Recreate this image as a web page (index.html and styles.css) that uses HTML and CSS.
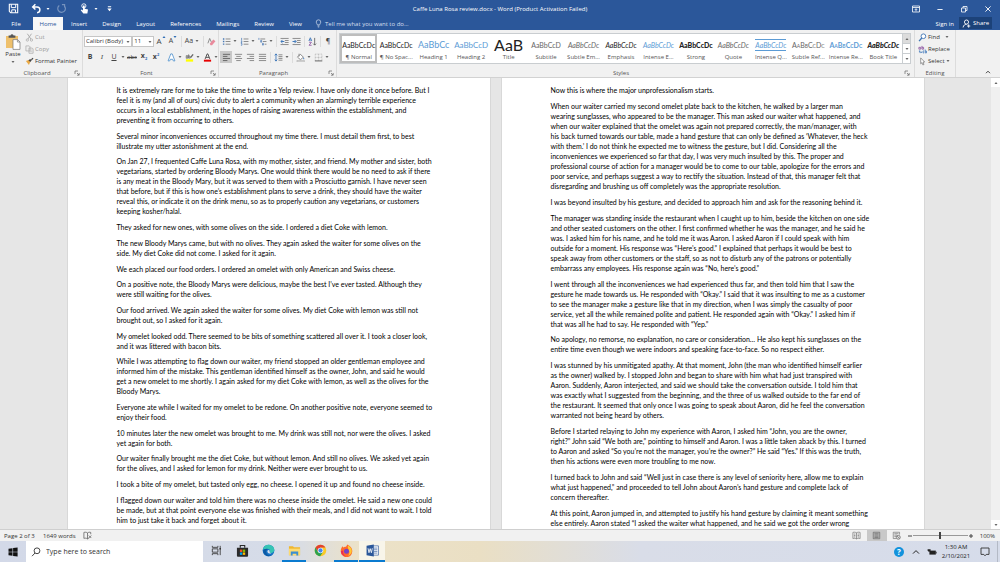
FILE: index.html
```html
<!DOCTYPE html>
<html lang="en">
<head>
<meta charset="utf-8">
<title>Caffe Luna Rosa review.docx - Word</title>
<link rel="stylesheet" href="styles.css">
</head>
<body>
<svg class="defs" aria-hidden="true">
  <symbol id="caret" viewBox="0 0 4 4"><path d="M.5 1h3L2 3z" fill="currentColor"/></symbol>
  <symbol id="launch" viewBox="0 0 6 6"><path d="M1 4V1h3M3 3l2 2M5.2 3v2.2H3" fill="none" stroke="#666" stroke-width=".7"/></symbol>
</svg>

<header class="top">
  <div class="titlebar">
    <div class="quick">
      <button class="tb spaced" aria-label="Save"><svg viewBox="0 0 10 10"><path d="M1.2 1.2h7.6v7.6H2.4L1.2 7.6z" fill="none" stroke="#fff"/><path d="M3 1.2v3h4v-3M3.4 8.8V6.2h3.4v2.6" fill="none" stroke="#fff" stroke-width=".9"/></svg></button>
      <button class="tb tb-split" aria-label="Undo"><svg viewBox="0 0 10 10"><path d="M4 1.2L1.5 3.6 4 6M1.8 3.6h3.7a2.6 2.6 0 0 1 0 5.2" fill="none" stroke="#fff" stroke-width="1.3"/></svg><svg class="caret"><use href="#caret"/></svg></button>
      <button class="tb dim spaced" aria-label="Redo"><svg viewBox="0 0 10 10"><path d="M3 2.2A3.5 3.5 0 1 0 7.6 2.6M5.4 1.4h2.4v2.6" fill="none" stroke="#fff" stroke-width="1.1"/></svg></button>
      <button class="tb tb-split" aria-label="Touch mode"><svg viewBox="0 0 10 10"><circle cx="4.4" cy="2.6" r="1.9" fill="none" stroke="#fff" stroke-width=".8"/><path d="M3.6 2.2h1.6v3l3 .8-.6 3.6H4L1.6 6.6l.8-.6 1.2.8z" fill="#fff"/></svg><svg class="caret"><use href="#caret"/></svg></button>
      <button class="tb narrow" aria-label="Customize"><svg viewBox="0 0 10 10"><path d="M3.5 3h3v.9h-3zM3 5h4L5 7.4z" fill="#fff"/></svg></button>
    </div>
    <div class="doc-title">Caffe Luna Rosa review.docx - Word (Product Activation Failed)</div>
    <div class="win">
      <button aria-label="Ribbon options"><svg viewBox="0 0 10 10"><path d="M1.5 2h7v6h-7zM1.5 3.5h7M5 7.4V4.8M3.8 5.9L5 4.7l1.2 1.2" fill="none" stroke="#fff" stroke-width=".8"/></svg></button>
      <button aria-label="Minimize"><svg viewBox="0 0 10 10"><path d="M2.4 5.5h5.2" stroke="#fff" stroke-width=".9"/></svg></button>
      <button aria-label="Restore"><svg viewBox="0 0 10 10"><path d="M2.5 4h4v4h-4zM4 4V2.5h4v4H6.5" fill="none" stroke="#fff" stroke-width=".8"/></svg></button>
      <button aria-label="Close"><svg viewBox="0 0 10 10"><path d="M2.4 2.4l5.2 5.2M7.6 2.4L2.4 7.6" stroke="#fff" stroke-width=".9"/></svg></button>
    </div>
  </div>
  <nav class="tabs">
    <button class="file">File</button>
    <button class="active">Home</button>
    <button>Insert</button>
    <button>Design</button>
    <button>Layout</button>
    <button>References</button>
    <button>Mailings</button>
    <button>Review</button>
    <button>View</button>
    <button class="tell"><svg viewBox="0 0 8 10"><path d="M2.8 6.6C2.6 5.4 1.4 5 1.4 3.4a2.6 2.6 0 0 1 5.2 0c0 1.6-1.2 2-1.4 3.2zM2.9 7.8h2.2M3.2 9h1.6" fill="none" stroke="currentColor" stroke-width=".8"/></svg>Tell me what you want to do...</button>
    <span class="grow"></span>
    <button class="signin">Sign in</button>
    <button class="share"><svg viewBox="0 0 10 10"><circle cx="5" cy="3.4" r="2.3" fill="none" stroke="#fff"/><path d="M1.2 9.4C1.6 6.6 3.4 6 5 6M7.4 6v3.6M5.6 7.8h3.6" fill="none" stroke="#fff"/></svg>Share</button>
  </nav>
</header>

<section class="ribbon" aria-label="Home ribbon">
  <div class="group clipboard">
    <div class="group-body">
      <button class="paste"><svg viewBox="0 0 16 17"><path d="M1 3h12v12H1z" fill="#eec06c"/><path d="M3.6 2.4h1.8a1.7 1.7 0 0 1 3.2 0h1.8v2.4H3.6z" fill="#555"/><path d="M8 6.6h4.6L15 9v7.4H8z" fill="#fff" stroke="#777" stroke-width=".7"/><path d="M12.4 6.6V9H15" fill="none" stroke="#777" stroke-width=".7"/></svg>Paste<svg class="caret"><use href="#caret"/></svg></button>
      <div class="stack">
        <button class="off"><svg viewBox="0 0 10 10"><path d="M2.6.8l4 6M7.2.8l-4 6" fill="none" stroke="#aaa"/><circle cx="2.6" cy="7.8" r="1.3" fill="none" stroke="#aaa" stroke-width=".8"/><circle cx="7.2" cy="7.8" r="1.3" fill="none" stroke="#aaa" stroke-width=".8"/></svg>Cut</button>
        <button class="off"><svg viewBox="0 0 10 10"><path d="M1 1h3.6l1 1v4.6H1zM4.4 3.4H8l1 1v4.8H4.4z" fill="#eee" stroke="#aaa" stroke-width=".8"/><path d="M5.4 5.6H8M5.4 7.2H8" stroke="#bbb" stroke-width=".6"/></svg>Copy</button>
        <button><svg viewBox="0 0 10 10"><path d="M1 4.4l3-1.2 2 2-1.6 3.6z" fill="#eaa945"/><path d="M3.8 3.6l2-1.4 1.6 1.8-1.6 1.6zM6.6 2.6L8.6.8l.8 1L7.6 3.6z" fill="#444"/></svg>Format Painter</button>
      </div>
    </div>
    <div class="group-name">Clipboard<svg><use href="#launch"/></svg></div>
  </div>

  <div class="group font">
    <div class="group-body rows">
      <div class="row">
        <span class="pick pick-font"><select aria-label="Font"><option>Calibri (Body)</option></select><svg class="caret"><use href="#caret"/></svg></span>
        <span class="pick pick-size"><select aria-label="Font size"><option>11</option></select><svg class="caret"><use href="#caret"/></svg></span>
        <button class="ib big" aria-label="Grow font">A<svg class="mark"><use href="#caret"/></svg></button>
        <button class="ib" aria-label="Shrink font">A<svg class="mark flip"><use href="#caret"/></svg></button>
        <i class="sep"></i>
        <button class="ib wide">Aa<svg class="caret"><use href="#caret"/></svg></button>
        <i class="sep"></i>
        <button class="ib" aria-label="Clear formatting"><svg viewBox="0 0 10 10"><path d="M1 7l2-5.4L5 6" fill="none" stroke="#777" stroke-width=".9"/><path d="M3 7.4l4-4.6 2.4 2L5.6 9.2H4z" fill="#e98a9c"/></svg></button>
      </div>
      <div class="row">
        <button class="ib"><b>B</b></button>
        <button class="ib"><em class="serif">I</em></button>
        <button class="ib"><u>U</u></button>
        <button class="ic" aria-label="Underline style"><svg class="caret"><use href="#caret"/></svg></button>
        <button class="ib small"><s>abc</s></button>
        <button class="ib"><b>x<sub>2</sub></b></button>
        <button class="ib"><b>x<sup>2</sup></b></button>
        <i class="sep"></i>
        <button class="ib" aria-label="Text effects"><svg viewBox="0 0 10 10"><path d="M1.2 8.8L4.2 1h1.6l3 7.8H7L6.3 7H3.7L3 8.8z" fill="#fff" stroke="#4d8fcc" stroke-width=".9"/></svg></button>
        <button class="ic" aria-label="Text effects menu"><svg class="caret"><use href="#caret"/></svg></button>
        <button class="ib" aria-label="Highlight"><svg viewBox="0 0 10 10"><path d="M1 7h8v2.6H1z" fill="#ff0"/><path d="M1.4 5.8V3h1.6v2.8zM4 5.8V1.6M4 3.4h1.6v2.2H4" fill="none" stroke="#555" stroke-width=".8"/><path d="M5.8 6l.4-2L8.4 1l1.2.9L7.2 5z" fill="#666"/></svg></button>
        <button class="ic" aria-label="Highlight color"><svg class="caret"><use href="#caret"/></svg></button>
        <button class="ib" aria-label="Font color"><svg viewBox="0 0 10 10"><path d="M1 7.4h8v2.2H1z" fill="#e60000"/><path d="M2.4 6.6L4.6 1h.8l2.2 5.6M3.2 4.8h3.6" fill="none" stroke="#444"/></svg></button>
        <button class="ic" aria-label="Font color menu"><svg class="caret"><use href="#caret"/></svg></button>
      </div>
    </div>
    <div class="group-name">Font<svg><use href="#launch"/></svg></div>
  </div>

  <div class="group para">
    <div class="group-body rows">
      <div class="row">
        <button class="ib" aria-label="Bullets"><svg viewBox="0 0 10 10"><path d="M1 1.4h1.6V3H1zM1 4.3h1.6v1.5H1zM1 7.2h1.6v1.5H1z" fill="#4778b5"/><path d="M4 2.2h5.4M4 5h5.4M4 8h5.4" stroke="#777" stroke-width=".9"/></svg></button>
        <button class="ic" aria-label="Bullet menu"><svg class="caret"><use href="#caret"/></svg></button>
        <button class="ib" aria-label="Numbering"><svg viewBox="0 0 10 10"><path d="M1.8 1v2.4M1 4.3h1.2v.8L1 6h1.4M1 7.2h1.2v1.9H1" fill="none" stroke="#4778b5" stroke-width=".8"/><path d="M4 2.2h5.4M4 5h5.4M4 8h5.4" stroke="#777" stroke-width=".9"/></svg></button>
        <button class="ic" aria-label="Numbering menu"><svg class="caret"><use href="#caret"/></svg></button>
        <button class="ib" aria-label="Multilevel list"><svg viewBox="0 0 10 10"><path d="M1 1v2.2M3 3.8h1v2H3zM5 7h1v2H5z" fill="none" stroke="#4778b5" stroke-width=".8"/><path d="M2.6 2.2H8M5.4 5h4M7.4 8h2" stroke="#777" stroke-width=".9"/></svg></button>
        <button class="ic" aria-label="Multilevel menu"><svg class="caret"><use href="#caret"/></svg></button>
        <i class="sep"></i>
        <button class="ib" aria-label="Decrease indent"><svg viewBox="0 0 10 10"><path d="M.6 1.6h9M5.4 3.9h4.2M5.4 6.1h4.2M.6 8.4h9" stroke="#777" stroke-width=".9"/><path d="M4.8 5H1.2M2.8 3.2L1 5l1.8 1.8" fill="none" stroke="#2f6db5"/></svg></button>
        <button class="ib" aria-label="Increase indent"><svg viewBox="0 0 10 10"><path d="M.6 1.6h9M5.4 3.9h4.2M5.4 6.1h4.2M.6 8.4h9" stroke="#777" stroke-width=".9"/><path d="M.6 5h3.6M2.8 3.2L4.6 5 2.8 6.8" fill="none" stroke="#2f6db5"/></svg></button>
        <i class="sep"></i>
        <button class="ib" aria-label="Sort"><svg viewBox="0 0 10 10"><path d="M1 4.4L2.6.8l1.6 3.6M1.6 3.4h2" fill="none" stroke="#2f6db5" stroke-width=".9"/><path d="M1.2 5.8h2.6L1.2 9.2h2.8" fill="none" stroke="#8a4f9e" stroke-width=".9"/><path d="M7.4 1v8M5.8 7.4L7.4 9 9 7.4" fill="none" stroke="#555" stroke-width=".9"/></svg></button>
        <i class="sep"></i>
        <button class="ib">¶</button>
      </div>
      <div class="row">
        <button class="ib on" aria-label="Align left"><svg viewBox="0 0 10 10"><path d="M1 1.5h8M1 3.8h5M1 6.1h8M1 8.4h5" stroke="#555" stroke-width=".9"/></svg></button>
        <button class="ib" aria-label="Center"><svg viewBox="0 0 10 10"><path d="M1 1.5h8M2.5 3.8h5M1 6.1h8M2.5 8.4h5" stroke="#777" stroke-width=".9"/></svg></button>
        <button class="ib" aria-label="Align right"><svg viewBox="0 0 10 10"><path d="M1 1.5h8M4 3.8h5M1 6.1h8M4 8.4h5" stroke="#777" stroke-width=".9"/></svg></button>
        <button class="ib" aria-label="Justify"><svg viewBox="0 0 10 10"><path d="M1 1.5h8M1 3.8h8M1 6.1h8M1 8.4h8" stroke="#777" stroke-width=".9"/></svg></button>
        <i class="sep"></i>
        <button class="ib" aria-label="Line spacing"><svg viewBox="0 0 10 10"><path d="M2.2 1v8M.8 2.6L2.2 1l1.4 1.6M.8 7.4L2.2 9l1.4-1.6" fill="none" stroke="#2f6db5" stroke-width=".9"/><path d="M5 2h4.4M5 4h4.4M5 6h4.4M5 8h4.4" stroke="#777" stroke-width=".9"/></svg></button>
        <button class="ic" aria-label="Line spacing menu"><svg class="caret"><use href="#caret"/></svg></button>
        <i class="sep"></i>
        <button class="ib" aria-label="Shading"><svg viewBox="0 0 10 10"><path d="M1.6 4.6L4.8 1.4l3.4 3.2L5 7.4zM3.4.8v3" fill="#fff" stroke="#666" stroke-width=".8"/><path d="M8.4 4.6c1 1.4 1 2.2.4 2.4s-1-.6-.4-2.4" fill="#2f6db5"/><path d="M1 8.4h8.4v1.2H1z" fill="#fff" stroke="#888" stroke-width=".5"/></svg></button>
        <button class="ic" aria-label="Shading menu"><svg class="caret"><use href="#caret"/></svg></button>
        <button class="ib" aria-label="Borders"><svg viewBox="0 0 10 10"><path d="M1.4 1.2h7.4v7.4M1.4 1.2v7.4M5.1 1.2v7.4M1.4 4.9h7.4" fill="none" stroke="#aaa" stroke-width=".7" stroke-dasharray="1 .6"/><path d="M1 8.8h8.2" stroke="#555"/></svg></button>
        <button class="ic" aria-label="Borders menu"><svg class="caret"><use href="#caret"/></svg></button>
      </div>
    </div>
    <div class="group-name">Paragraph<svg><use href="#launch"/></svg></div>
  </div>

  <div class="group styles">
    <div class="gallery">
      <div class="cards">
        <button class="card chosen"><span class="demo">AaBbCcDc</span><span>¶ Normal</span></button>
        <button class="card"><span class="demo">AaBbCcDc</span><span>¶ No Spac...</span></button>
        <button class="card"><span class="demo h1">AaBbCc</span><span>Heading 1</span></button>
        <button class="card"><span class="demo h2">AaBbCcD</span><span>Heading 2</span></button>
        <button class="card"><span class="demo title">AaB</span><span>Title</span></button>
        <button class="card"><span class="demo gray">AaBbCcD</span><span>Subtitle</span></button>
        <button class="card"><span class="demo gray it">AaBbCcDc</span><span>Subtle Em...</span></button>
        <button class="card"><span class="demo it">AaBbCcDc</span><span>Emphasis</span></button>
        <button class="card"><span class="demo blue it">AaBbCcDc</span><span>Intense E...</span></button>
        <button class="card"><span class="demo bold">AaBbCcDc</span><span>Strong</span></button>
        <button class="card"><span class="demo gray it">AaBbCcDc</span><span>Quote</span></button>
        <button class="card"><span class="demo blue it ruled">AaBbCcDc</span><span>Intense Q...</span></button>
        <button class="card"><span class="demo gray caps">AaBbCcDc</span><span>Subtle Ref...</span></button>
        <button class="card"><span class="demo blue caps semi">AaBbCcDc</span><span>Intense Re...</span></button>
        <button class="card"><span class="demo bold it">AaBbCcDc</span><span>Book Title</span></button>
      </div>
      <div class="scrolls">
        <button class="off" aria-label="Previous styles"><svg class="caret flip"><use href="#caret"/></svg></button>
        <button aria-label="Next styles"><svg class="caret"><use href="#caret"/></svg></button>
        <button class="more" aria-label="More styles"><svg class="caret"><use href="#caret"/></svg></button>
      </div>
    </div>
    <div class="group-name">Styles<svg><use href="#launch"/></svg></div>
  </div>

  <div class="group editing">
    <div class="group-body">
      <div class="stack">
        <button><svg viewBox="0 0 10 10"><circle cx="6" cy="3.6" r="2.6" fill="#fff" stroke="#3f76b5"/><path d="M4.2 5.6L1.2 9" stroke="#3f76b5" stroke-width="1.5"/></svg>Find<svg class="caret far"><use href="#caret"/></svg></button>
        <button><svg viewBox="0 0 10 10"><path d="M1 2.6h2v2H1zM4.4 1v3.6h1.8v-2H4.4" fill="none" stroke="#8a4f9e" stroke-width=".9"/><path d="M6.6 6.6h-1v2.2h1.2M8 5v3.8h1.4V6.8H8M1.6 6v2h2.2M3 7l1 1-1 1" fill="none" stroke="#2f6db5" stroke-width=".8"/></svg>Replace</button>
        <button><svg viewBox="0 0 10 10"><path d="M3 1l4.4 4.6H5.6l1 2.8-1.2.4-1-2.6L3 7.6z" fill="#fff" stroke="#666" stroke-width=".7"/></svg>Select<svg class="caret"><use href="#caret"/></svg></button>
      </div>
    </div>
    <div class="group-name plain">Editing</div>
  </div>
  <button class="collapse" aria-label="Collapse ribbon"><svg viewBox="0 0 6 6"><path d="M1 4.2l2-2 2 2" fill="none" stroke="#444"/></svg></button>
</section>

<main class="workspace">
  <div class="pages">
    <article class="page">
      <p>It is extremely rare for me to take the time to write a Yelp review. I have only done it once before. But I<br>feel it is my (and all of ours) civic duty to alert a community when an alarmingly terrible experience<br>occurs in a local establishment, in the hopes of raising awareness within the establishment, and<br>preventing it from occurring to others.</p>
      <p>Several minor inconveniences occurred throughout my time there. I must detail them first, to best<br>illustrate my utter astonishment at the end.</p>
      <p>On Jan 27, I frequented Caffe Luna Rosa, with my mother, sister, and friend. My mother and sister, both<br>vegetarians, started by ordering Bloody Marys. One would think there would be no need to ask if there<br>is any meat in the Bloody Mary, but it was served to them with a Prosciutto garnish. I have never seen<br>that before, but if this is how one’s establishment plans to serve a drink, they should have the waiter<br>reveal this, or indicate it on the drink menu, so as to properly caution any vegetarians, or customers<br>keeping kosher/halal.</p>
      <p>They asked for new ones, with some olives on the side. I ordered a diet Coke with lemon.</p>
      <p>The new Bloody Marys came, but with no olives. They again asked the waiter for some olives on the<br>side. My diet Coke did not come. I asked for it again.</p>
      <p>We each placed our food orders. I ordered an omelet with only American and Swiss cheese.</p>
      <p>On a positive note, the Bloody Marys were delicious, maybe the best I’ve ever tasted. Although they<br>were still waiting for the olives.</p>
      <p>Our food arrived. We again asked the waiter for some olives. My diet Coke with lemon was still not<br>brought out, so I asked for it again.</p>
      <p>My omelet looked odd. There seemed to be bits of something scattered all over it. I took a closer look,<br>and it was littered with bacon bits.</p>
      <p>While I was attempting to flag down our waiter, my friend stopped an older gentleman employee and<br>informed him of the mistake. This gentleman identified himself as the owner, John, and said he would<br>get a new omelet to me shortly. I again asked for my diet Coke with lemon, as well as the olives for the<br>Bloody Marys.</p>
      <p>Everyone ate while I waited for my omelet to be redone. On another positive note, everyone seemed to<br>enjoy their food.</p>
      <p>10 minutes later the new omelet was brought to me. My drink was still not, nor were the olives. I asked<br>yet again for both.</p>
      <p>Our waiter finally brought me the diet Coke, but without lemon. And still no olives. We asked yet again<br>for the olives, and I asked for lemon for my drink. Neither were ever brought to us.</p>
      <p>I took a bite of my omelet, but tasted only egg, no cheese. I opened it up and found no cheese inside.</p>
      <p>I flagged down our waiter and told him there was no cheese inside the omelet. He said a new one could<br>be made, but at that point everyone else was finished with their meals, and I did not want to wait. I told<br>him to just take it back and forget about it.</p>
    </article>
    <article class="page continued">
      <p>Now this is where the major unprofessionalism starts.</p>
      <p>When our waiter carried my second omelet plate back to the kitchen, he walked by a larger man<br>wearing sunglasses, who appeared to be the manager. This man asked our waiter what happened, and<br>when our waiter explained that the omelet was again not prepared correctly, the man/manager, with<br>his back turned towards our table, made a hand gesture that can only be defined as ‘Whatever, the heck<br>with them.’ I do not think he expected me to witness the gesture, but I did. Considering all the<br>inconveniences we experienced so far that day, I was very much insulted by this. The proper and<br>professional course of action for a manager would be to come to our table, apologize for the errors and<br>poor service, and perhaps suggest a way to rectify the situation. Instead of that, this manager felt that<br>disregarding and brushing us off completely was the appropriate resolution.</p>
      <p>I was beyond insulted by his gesture, and decided to approach him and ask for the reasoning behind it.</p>
      <p>The manager was standing inside the restaurant when I caught up to him, beside the kitchen on one side<br>and other seated customers on the other. I first confirmed whether he was the manager, and he said he<br>was. I asked him for his name, and he told me it was Aaron. I asked Aaron if I could speak with him<br>outside for a moment. His response was “Here’s good.” I explained that perhaps it would be best to<br>speak away from other customers or the staff, so as not to disturb any of the patrons or potentially<br>embarrass any employees. His response again was “No, here’s good.”</p>
      <p>I went through all the inconveniences we had experienced thus far, and then told him that I saw the<br>gesture he made towards us. He responded with “Okay.” I said that it was insulting to me as a customer<br>to see the manager make a gesture like that in my direction, when I was simply the casualty of poor<br>service, yet all the while remained polite and patient. He responded again with “Okay.” I asked him if<br>that was all he had to say. He responded with “Yep.”</p>
      <p>No apology, no remorse, no explanation, no care or consideration… He also kept his sunglasses on the<br>entire time even though we were indoors and speaking face-to-face. So no respect either.</p>
      <p>I was stunned by his unmitigated apathy. At that moment, John (the man who identified himself earlier<br>as the owner) walked by. I stopped John and began to share with him what had just transpired with<br>Aaron. Suddenly, Aaron interjected, and said we should take the conversation outside. I told him that<br>was exactly what I suggested from the beginning, and the three of us walked outside to the far end of<br>the restaurant. It seemed that only once I was going to speak about Aaron, did he feel the conversation<br>warranted not being heard by others.</p>
      <p>Before I started relaying to John my experience with Aaron, I asked him “John, you are the owner,<br>right?” John said “We both are,” pointing to himself and Aaron. I was a little taken aback by this. I turned<br>to Aaron and asked “So you’re not the manager, you’re the owner?” He said “Yes.” If this was the truth,<br>then his actions were even more troubling to me now.</p>
      <p>I turned back to John and said “Well just in case there is any level of seniority here, allow me to explain<br>what just happened,” and proceeded to tell John about Aaron’s hand gesture and complete lack of<br>concern thereafter.</p>
      <p>At this point, Aaron jumped in, and attempted to justify his hand gesture by claiming it meant something<br>else entirely. Aaron stated “I asked the waiter what happened, and he said we got the order wrong</p>
    </article>
  </div>
  <div class="vscroll">
    <button aria-label="Scroll up"><svg class="caret flip"><use href="#caret"/></svg></button>
    <span></span>
    <button aria-label="Scroll down"><svg class="caret"><use href="#caret"/></svg></button>
  </div>
</main>

<footer class="status">
  <span class="st-page">Page 2 of 3</span>
  <span class="st-words">1649 words</span>
  <button aria-label="Proofing"><svg viewBox="0 0 10 10"><path d="M5 2.2C3.8 1.2 2.4 1.2 1 1.6v6.6c1.4-.4 2.8-.4 4 .6zM5 2.2c1.2-1 2.6-1 3.6-.6v2M5 8.8c.6-.6 1.2-.8 1.8-.8M6.4 5l2.8 2.8M9.2 5L6.4 7.8" fill="none" stroke="#555" stroke-width=".8"/></svg></button>
  <span class="grow"></span>
  <button class="view" aria-label="Read mode"><svg viewBox="0 0 10 10"><path d="M5 2C3.6 1.2 2.2 1.2 1 1.6v6.8c1.4-.4 2.6-.4 4 .4 1.4-.8 2.6-.8 4-.4V1.6c-1.2-.4-2.6-.4-4 .4v6.8M2.2 3.4h1.6M2.2 5h1.6M2.2 6.6h1.6M6.2 3.4h1.6M6.2 5h1.6M6.2 6.6h1.6" fill="none" stroke="#666" stroke-width=".7"/></svg></button>
  <button class="view on" aria-label="Print layout"><svg viewBox="0 0 10 10"><path d="M1.4 1.4h7.2v7.2H1.4zM2.6 3h4.8M2.6 4.4h4.8M2.6 5.8h4.8M2.6 7.2h4.8" fill="none" stroke="#666" stroke-width=".8"/></svg></button>
  <button class="view" aria-label="Web layout"><svg viewBox="0 0 10 10"><path d="M5 8.4H1.4v-7h7V4M2.6 3h4.6M2.6 4.6h3M2.6 6.2h2" fill="none" stroke="#777" stroke-width=".8"/><circle cx="7" cy="7" r="2.2" fill="#ddd" stroke="#666" stroke-width=".8"/><path d="M5.6 5.6l2.8 2.8" stroke="#666" stroke-width=".7"/></svg></button>
  <button class="zb" aria-label="Zoom out"><svg viewBox="0 0 6 6"><path d="M1 3h4" stroke="#444"/></svg></button>
  <input class="zoom" type="range" min="10" max="190" value="100" aria-label="Zoom">
  <button class="zb" aria-label="Zoom in"><svg viewBox="0 0 6 6"><path d="M1 3h4M3 1v4" stroke="#444"/></svg></button>
  <span class="pct">100%</span>
</footer>

<footer class="taskbar">
  <button class="start" aria-label="Start"><svg viewBox="0 0 10 10"><path d="M.5 1.8L4.5 1.2v3.5h-4zM5.1 1.1L9.6.5v4.2H5.1zM.5 5.3h4v3.5l-4-.6zM5.1 5.3h4.5v4.2l-4.5-.6z" fill="#111"/></svg></button>
  <label class="search"><svg viewBox="0 0 10 10"><circle cx="6" cy="3.8" r="2.9" fill="none" stroke="#333" stroke-width=".9"/><path d="M4 6L1 9.2" stroke="#333" stroke-width=".9"/></svg><input type="text" placeholder="Type here to search" aria-label="Search"></label>
  <div class="apps">
    <button aria-label="Task view"><svg viewBox="0 0 14 14"><path d="M2.5 2v1.6h6V2M2.5 12v-1.6h6V12M2.5 5.2h6v3.6h-6zM11 2v10" fill="none" stroke="#333" stroke-width=".9"/><path d="M10.2 4.4h1.6V6h-1.6z" fill="#333"/></svg></button>
    <button aria-label="Store"><svg viewBox="0 0 14 14"><path d="M1 4h12v8.6a1 1 0 0 1-1 1H2a1 1 0 0 1-1-1z" fill="#2b2b2b"/><path d="M4.6 4V1.6h4.8V4" fill="none" stroke="#2b2b2b" stroke-width="1.2"/><path d="M4.2 6h2.6v2.6H4.2z" fill="#f25022"/><path d="M7.3 6h2.6v2.6H7.3z" fill="#7fba00"/><path d="M4.2 9.1h2.6v2.6H4.2z" fill="#00a4ef"/><path d="M7.3 9.1h2.6v2.6H7.3z" fill="#ffb900"/></svg></button>
    <button aria-label="Edge"><svg viewBox="0 0 14 14"><circle cx="7" cy="7" r="6.3" fill="#1572c4"/><path d="M.8 6.2C1.4 2.6 4 .7 7 .7c3.6 0 6.3 2.6 6.3 5.6 0 2.2-1.6 3.4-3.4 3.4-1.6 0-2-.8-1.6-1.4.8-1 .2-3-1.9-3C4 5.3 1.6 5 .8 6.2z" fill="#35c4b5"/><path d="M6.4 5.3C4.6 6 3.8 8 4.8 10s3.6 3.3 6.4 1.7C9.6 13.4 7 13.5 5 12.6 1.8 11 1.2 8.6 1.4 7c.6-1.6 3-2.4 5-1.7z" fill="#0c59a4"/><path d="M7 6.4c1 0 1.6.8 1.2 1.8-.3.9.5 1.7 2 1.8-1 .6-3.7.5-4.3-1.3-.3-1 .1-2 1.1-2.3z" fill="#d8e0ee"/></svg></button>
    <button class="run" aria-label="File Explorer"><svg viewBox="0 0 14 14"><path d="M1 2.4h4.4l1 1.2H13v8.4H1z" fill="#f0b62e"/><path d="M1 5h12v7H1z" fill="#fddb72"/><path d="M3 8h8v4.4H9v-2H5v2H3z" fill="#3d8fd1"/></svg></button>
    <button aria-label="Chrome"><svg viewBox="0 0 14 14"><circle cx="7" cy="7" r="6.2" fill="#f9c928"/><path d="M1.6 3.9A6.2 6.2 0 0 1 12.4 3.9H7L4.3 8.5z" fill="#e2412f"/><path d="M1.6 3.9A6.2 6.2 0 0 0 6.6 13.2L9.7 8.5H4.3z" fill="#2da24f"/><circle cx="7" cy="7" r="3" fill="#fff"/><circle cx="7" cy="7" r="2.3" fill="#4286f0"/></svg></button>
    <button class="run" aria-label="Firefox"><svg viewBox="0 0 14 14"><path d="M7.6.6c4 2 6 4.4 5.6 7.6A6.2 6.2 0 0 1 .8 7.8C.7 5.4 1.6 3.4 3 2.4l.4 1.4C5 3 7.4 3.4 7.6.6z" fill="#ff6a2b"/><path d="M8.6 1.6c3 1.8 4.6 4 4 7-.6 2-2 3.4-4 4 1.6-2 2-4 1-6-.7-1.6-1.6-3-1-5z" fill="#ffc933"/><path d="M1 7.8c.4 3 2.6 5.4 5.4 5.7C4 12 3 10.4 3.4 7z" fill="#e8275a"/><circle cx="7" cy="7.7" r="2.7" fill="#7544c7"/></svg></button>
    <button class="run current" aria-label="Word"><svg viewBox="0 0 14 14"><path d="M7 2h6.4v10H7z" fill="#fff" stroke="#2b579a" stroke-width=".7"/><path d="M8.6 4.4h3.6M8.6 6.2h3.6M8.6 8h3.6M8.6 9.8h3.6" stroke="#2b579a" stroke-width=".7"/><path d="M.6 2L8.4.6v12.8L.6 12z" fill="#2b579a"/><path d="M2.2 4.6l1 4.8 1.3-4.4 1.3 4.4 1-4.8" fill="none" stroke="#fff" stroke-width=".9"/></svg></button>
  </div>
  <span class="grow"></span>
  <div class="tray">
    <button class="help" aria-label="Help">?</button>
    <button aria-label="Show hidden icons"><svg viewBox="0 0 10 10"><path d="M2 6.6l3-3 3 3" fill="none" stroke="#222"/></svg></button>
    <button aria-label="Battery"><svg viewBox="0 0 10 10"><path d="M2.4 3.6h6.4v4H2.4z" fill="#222"/><path d="M8.8 4.8h.8v1.6h-.8zM.6 2.2h3v1.6l-1.2 1H1.8L.6 3.8z" fill="#222"/></svg></button>
    <time class="clock">1:30 AM<br>2/10/2021</time>
    <button class="note" aria-label="Notifications"><svg viewBox="0 0 10 10"><path d="M1 1h8v6.4H6.2L5 8.8 3.8 7.4H1z" fill="none" stroke="#333" stroke-width=".9"/></svg></button>
  </div>
</footer>
</body>
</html>
```
FILE: styles.css
```css
* { box-sizing: border-box; }
html, body { height: 100%; }
body {
  margin: 0;
  display: flex;
  flex-direction: column;
  overflow: hidden;
  font-family: "Open Sans", "Noto Sans", sans-serif;
  font-size: 6px;
  line-height: 8px;
  color: #333;
  background: #e6e6e6;
}
button, input, select { font: inherit; color: inherit; border: 0; padding: 0; margin: 0; background: none; }
button { display: flex; align-items: center; justify-content: center; white-space: nowrap; }
svg { display: block; flex: none; }
.defs { position: absolute; width: 0; height: 0; }
.grow { flex: 1; }
.caret { width: 4px; height: 4px; color: #666; }
.flip { transform: rotate(180deg); }

/* Title bar and tabs */
.top { background: #2b579a; color: #fff; flex: none; }
.titlebar { display: grid; grid-template-columns: 1fr auto 1fr; align-items: center; height: 17px; }
.quick { display: flex; align-items: center; padding-left: 8px; gap: 6px; }
.tb svg:first-child { width: 11px; height: 11px; }
.tb { min-width: 11px; }
.spaced { margin-right: 6px; }
.tb-split { gap: 4px; }
.tb .caret { color: #fff; }
.dim { opacity: .35; }
.doc-title { white-space: nowrap; }
.win { display: flex; justify-content: flex-end; gap: 14px; padding-right: 7px; }
.win svg { width: 10px; height: 10px; }
.tabs { display: flex; height: 13px; align-items: stretch; padding-right: 8px; gap: 1px; }
.tabs button { padding: 0 7px; }
.tabs .file { width: 32px; }
.tabs .active { background: #f8f8f8; color: #2b579a; width: 30px; }
.tabs .tell { gap: 3px; color: #d5dfee; padding-left: 5px; }
.tell svg { width: 7px; height: 9px; }
.tabs .share { background: #1c4279; gap: 2px; padding: 0 4px; margin-bottom: 1px; width: 33px; }
.tabs .signin { padding: 0 4px; }
.share svg { width: 9px; height: 9px; }

/* Ribbon */
.ribbon { display: flex; flex: none; height: 48px; background: #f1f1f1; border-bottom: 1px solid #d2d2d2; }
.group { display: flex; flex-direction: column; border-right: 1px solid #dcdcdc; padding: 1px 1px 0; flex: none; }
.group-body { flex: 1; display: flex; min-height: 0; }
.group-name { display: flex; justify-content: center; align-items: center; height: 9px; margin-top: auto; padding-right: 8px; position: relative; color: #555; }
.plain { padding-right: 0; }
.group-name svg { position: absolute; right: 1px; top: 2px; width: 6px; height: 6px; }
.clipboard { width: 83px; }
.font { width: 136px; }
.para { width: 118px; }
.styles { flex: 1; min-width: 0; padding: 3px 3px 0 2px; }
.editing { width: 41px; }
.paste { flex-direction: column; width: 24px; justify-content: flex-start; padding-top: 2px; }
.paste svg:first-child { width: 16px; height: 17px; }
.paste .caret { margin-top: 2px; }
.stack { display: flex; flex-direction: column; }
.stack button { height: 12px; gap: 1px; justify-content: flex-start; }
.stack svg:first-child { width: 9px; height: 9px; }
.stack .far { margin-left: 4px; }
.stack .off { color: #999; }
.editing .stack { padding-left: 2px; }
.rows { flex-direction: column; padding-top: 4px; gap: 4px; }
.row { display: flex; align-items: center; height: 12px; }
.pick { position: relative; height: 11px; display: flex; }
.pick select { appearance: none; width: 100%; border: 1px solid #c6c6c6; background: #fff; padding-left: 1px; }
.pick .caret { position: absolute; right: 2px; top: 4px; }
.pick-font { width: 49px; }
.pick-size { width: 22px; margin-right: 1px; }
.ib { width: 12px; height: 12px; flex: none; font-size: 7px; color: #444; }
.ib svg:not(.caret):not(.mark) { width: 9px; height: 9px; }
.big { font-size: 8px; }
.small { font-size: 6px; }
.wide { width: 18px; gap: 2px; }
.mark { width: 4px; height: 4px; color: #2f6db5; align-self: flex-start; transform: rotate(180deg); }
.mark.flip { transform: none; }
.ic { width: 6px; height: 12px; flex: none; }
.sep { width: 1px; height: 11px; background: #dcdcdc; margin: 0 1px 0 2px; }
.serif { font-family: "Liberation Serif", serif; }
.on { background: #c8c8c8; }
sub, sup { font-size: 4px; line-height: 4px; color: #2f6db5; }

.gallery { display: flex; height: 31px; background: #fff; border: 1px solid #c9cdd0; }
.cards { flex: 1; display: grid; grid-template-columns: repeat(15, minmax(0, 1fr)); }
.card { flex-direction: column; justify-content: flex-end; align-items: center; padding: 0 1px 2px; color: #555; }
.chosen { box-shadow: inset 0 0 0 2px #bdbdbd; }
.demo { font: 7px/12px Lato, sans-serif; color: #222; height: 14px; }
.h1 { font-size: 9px; color: #5b9bd5; }
.h2 { font-size: 8px; color: #5b9bd5; }
.title { font-size: 16px; }
.gray { color: #666; }
.blue { color: #5b9bd5; }
.it { font-style: italic; }
.bold { font-weight: 900; }
.semi { font-weight: 700; }
.caps { font-variant: small-caps; }
.ruled { border-top: 1px solid #5b9bd5; border-bottom: 1px solid #5b9bd5; height: 12px; line-height: 10px; margin-bottom: 2px; }
.scrolls { width: 8px; display: flex; flex-direction: column; border-left: 1px solid #c9cdd0; }
.scrolls button { flex: 1; border-bottom: 1px solid #c9cdd0; }
.scrolls .off { background: #dcdcdc; }
.scrolls .more { border-bottom: 0; }
.collapse { margin-left: auto; align-self: flex-end; width: 44px; justify-content: flex-end; padding: 0 9px 2px 0; }
.collapse svg { width: 6px; height: 6px; }

/* Document */
.workspace { flex: 1; min-height: 0; display: flex; background: #e6e6e6; }
.pages { flex: 1; display: flex; justify-content: center; gap: 10px; min-width: 0; }
.page {
  flex: 0 1 424px;
  background: #fff;
  border: solid #d8d8d8;
  border-width: 0 1px;
  padding: 7px 0 4px 49px;
  display: flex;
  flex-direction: column;
  justify-content: space-between;
  font: 7px/10px Lato, "Open Sans", sans-serif;
  color: #000;
  white-space: nowrap;
}
.continued { padding-bottom: 1px; }
.page p { margin: 0; }
.vscroll { width: 9px; display: flex; flex-direction: column; background: #f0f0f0; }
.vscroll button { height: 9px; background: #fff; }
.vscroll span { flex: 1; }

/* Status bar */
.status { display: flex; align-items: center; height: 12px; flex: none; background: #f1f1f1; border-top: 1px solid #cfcfcf; padding: 0 5px 0 4px; }
.st-page { width: 39px; }
.st-words { width: 40px; }
.status svg { width: 9px; height: 9px; }
.view { width: 20px; height: 11px; }
.zb { width: 6px; }
.status .zb svg { width: 6px; height: 6px; }
.zoom { appearance: none; width: 55px; height: 9px; background: linear-gradient(#999, #999) center / 100% 1px no-repeat; }
.zoom::-webkit-slider-thumb { appearance: none; width: 2px; height: 7px; background: #444; }
.pct { margin-left: 6px; }

/* Taskbar */
.taskbar { display: flex; flex: none; height: 21px; background: linear-gradient(90deg, #d3d9e8 0, #d6dce8 29%, #ece2c8 36%, #eadfc4 48%, #d9dde8 64%, #d6dcea 100%); color: #222; }
.start { width: 26px; }
.start svg { width: 10px; height: 10px; }
.search { width: 177px; background: #fff; display: flex; align-items: center; padding-left: 5px; gap: 5px; }
.search svg { width: 10px; height: 10px; }
.search input { flex: 1; min-width: 0; font-size: 7px; outline: 0; }
.search input::placeholder { color: #333; opacity: 1; }
.apps { display: flex; }
.apps button { width: 26px; border-bottom: 2px solid transparent; }
.apps svg { width: 13px; height: 13px; }
.apps .run { border-image: linear-gradient(90deg, transparent 10%, #0a7bd0 10%, #0a7bd0 90%, transparent 90%) 2; }
.apps .current { background: #f8f5ea; border-image: none; border-bottom-color: #0a7bd0; }
.tray { display: flex; align-items: center; padding-right: 2px; }
.tray button { width: 16px; height: 100%; }
.tray svg { width: 10px; height: 10px; }
.tray .help { width: 10px; height: 10px; border-radius: 50%; background: #1292dc; color: #fff; font-weight: 700; font-size: 8px; margin-right: 4px; }
.clock { width: 32px; text-align: center; line-height: 9px; }
.tray .note { width: 26px; border-right: 1px solid #b4bac6; }
```
